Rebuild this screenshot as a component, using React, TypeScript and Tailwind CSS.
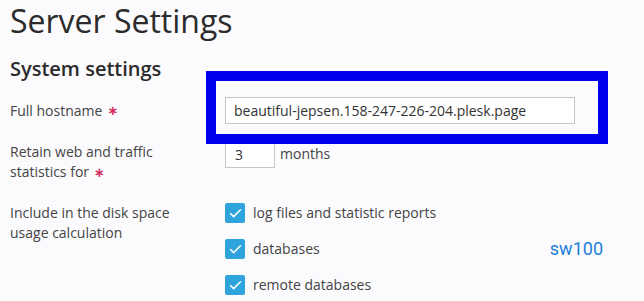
import { Check } from "lucide-react";

function Required() {
  return <span className="text-[#d3335f] ml-[5px] font-['DejaVu_Sans',sans-serif] font-bold text-[13px]">∗</span>;
}

function CheckRow({ label, extra }: { label: string; extra?: string }) {
  return (
    <div className="flex items-center h-[20px]">
      <span className="w-[20px] h-[20px] rounded-[2px] bg-[#2fa3dc] flex items-center justify-center shrink-0">
        <Check size={15} strokeWidth={2.4} color="#ffffff" />
      </span>
      <span className="ml-[8px] text-[14px] leading-[20px] text-[#444]">{label}</span>
      {extra && (
        <span className="ml-auto mr-[41px] text-[18px] text-[#1b7fd9] font-['Roboto',sans-serif]">{extra}</span>
      )}
    </div>
  );
}

export default function App() {
  return (
    <div className="w-[644px] h-[301px] bg-[#fbfbfd] relative overflow-hidden font-['Open_Sans',sans-serif] text-[#333]">
      <h1 className="pl-[10px] text-[32px] leading-[42px] font-normal text-[#2b2b2b]">Server Settings</h1>
      <h2 className="pl-[10px] mt-[13px] text-[20px] leading-[28px] font-semibold text-[#2b2b2b]">System settings</h2>

      <div className="grid grid-cols-[215px_1fr] pl-[10px] mt-[14px] text-[14px] leading-[20px] text-[#444]">
        <div className="flex items-center">
          Full hostname
          <Required />
        </div>
        <div className="h-[27px] w-[350px] border border-[#c6c6c6] bg-white flex items-center pl-[8px] text-[#333]">
          beautiful-jepsen.158-247-226-204.plesk.page
        </div>

        <div className="mt-[18px]">
          Retain web and traffic
          <br />
          statistics for
          <Required />
        </div>
        <div className="mt-[18px] flex items-start">
          <div className="h-[26px] w-[50px] border border-[#c6c6c6] bg-white flex items-center pl-[9px] text-[#333]">3</div>
          <span className="ml-[5px] leading-[24px]">months</span>
        </div>

        <div className="mt-[20px]">
          Include in the disk space
          <br />
          usage calculation
        </div>
        <div className="mt-[20px] flex flex-col gap-[16px]">
          <CheckRow label="log files and statistic reports" />
          <CheckRow label="databases" extra="sw100" />
          <CheckRow label="remote databases" />
        </div>
      </div>

      <div className="absolute left-[206px] top-[71px] w-[402px] h-[73px] border-[10px] border-[#0000ef]" />
    </div>
  );
}
